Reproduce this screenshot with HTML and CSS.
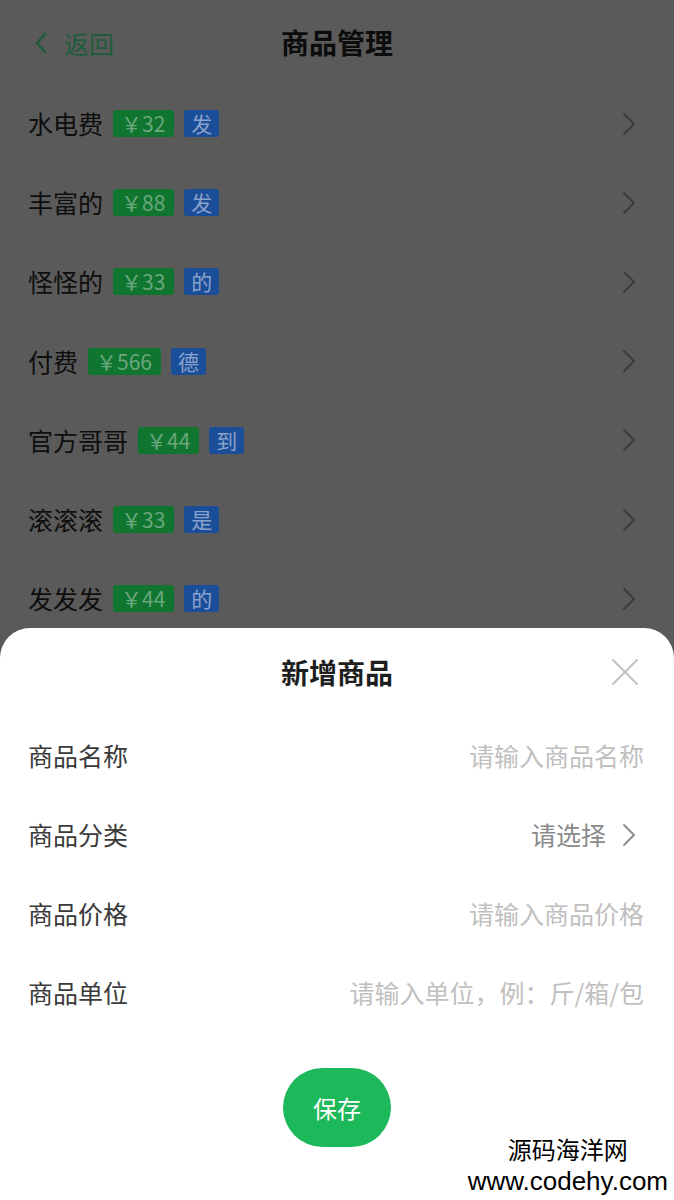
FILE: index.html
```html
<!DOCTYPE html>
<html lang="zh-CN">
<head>
<meta charset="utf-8">
<title>商品管理</title>
<link rel="stylesheet" href="styles.css">
</head>
<body>
<div class="screen">
  <header class="nav">
    <div class="back">
      <svg class="back-icon" width="14" height="22" viewBox="0 0 14 22"><polyline points="11,2 3,11 11,20" fill="none" stroke="currentColor" stroke-width="2.6" stroke-linecap="round" stroke-linejoin="round"/></svg>
      <span>返回</span>
    </div>
    <h1 class="nav-title">商品管理</h1>
    <div></div>
  </header>

  <ul class="list">
    <li class="row"><span class="name">水电费</span><span class="tag price">￥32</span><span class="tag unit">发</span><svg class="arrow" width="14" height="24" viewBox="0 0 14 24"><polyline points="2,2 12,12 2,22" fill="none" stroke="currentColor" stroke-width="1.8" stroke-linecap="round" stroke-linejoin="round"/></svg></li>
    <li class="row"><span class="name">丰富的</span><span class="tag price">￥88</span><span class="tag unit">发</span><svg class="arrow" width="14" height="24" viewBox="0 0 14 24"><polyline points="2,2 12,12 2,22" fill="none" stroke="currentColor" stroke-width="1.8" stroke-linecap="round" stroke-linejoin="round"/></svg></li>
    <li class="row"><span class="name">怪怪的</span><span class="tag price">￥33</span><span class="tag unit">的</span><svg class="arrow" width="14" height="24" viewBox="0 0 14 24"><polyline points="2,2 12,12 2,22" fill="none" stroke="currentColor" stroke-width="1.8" stroke-linecap="round" stroke-linejoin="round"/></svg></li>
    <li class="row"><span class="name">付费</span><span class="tag price">￥566</span><span class="tag unit">德</span><svg class="arrow" width="14" height="24" viewBox="0 0 14 24"><polyline points="2,2 12,12 2,22" fill="none" stroke="currentColor" stroke-width="1.8" stroke-linecap="round" stroke-linejoin="round"/></svg></li>
    <li class="row"><span class="name">官方哥哥</span><span class="tag price">￥44</span><span class="tag unit">到</span><svg class="arrow" width="14" height="24" viewBox="0 0 14 24"><polyline points="2,2 12,12 2,22" fill="none" stroke="currentColor" stroke-width="1.8" stroke-linecap="round" stroke-linejoin="round"/></svg></li>
    <li class="row"><span class="name">滚滚滚</span><span class="tag price">￥33</span><span class="tag unit">是</span><svg class="arrow" width="14" height="24" viewBox="0 0 14 24"><polyline points="2,2 12,12 2,22" fill="none" stroke="currentColor" stroke-width="1.8" stroke-linecap="round" stroke-linejoin="round"/></svg></li>
    <li class="row"><span class="name">发发发</span><span class="tag price">￥44</span><span class="tag unit">的</span><svg class="arrow" width="14" height="24" viewBox="0 0 14 24"><polyline points="2,2 12,12 2,22" fill="none" stroke="currentColor" stroke-width="1.8" stroke-linecap="round" stroke-linejoin="round"/></svg></li>
  </ul>

  <section class="sheet">
    <div class="sheet-head">
      <h2 class="sheet-title">新增商品</h2>
      <svg class="close" width="28" height="28" viewBox="0 0 28 28"><path d="M2 2 L26 26 M26 2 L2 26" stroke="currentColor" stroke-width="2.2" stroke-linecap="round"/></svg>
    </div>
    <div class="form">
      <div class="field"><span class="label">商品名称</span><span class="placeholder">请输入商品名称</span></div>
      <div class="field"><span class="label">商品分类</span><span class="select">请选择</span><svg class="arrow sel-arrow" width="14" height="24" viewBox="0 0 14 24"><polyline points="2,2 12,12 2,22" fill="none" stroke="currentColor" stroke-width="1.8" stroke-linecap="round" stroke-linejoin="round"/></svg></div>
      <div class="field"><span class="label">商品价格</span><span class="placeholder">请输入商品价格</span></div>
      <div class="field"><span class="label">商品单位</span><span class="placeholder">请输入单位，例：斤/箱/包</span></div>
    </div>
    <div class="actions"><button class="save">保存</button></div>
    <div class="watermark">
      <div class="wm-cn">源码海洋网</div>
      <div class="wm-url">www.codehy.com</div>
    </div>
  </section>
</div>
</body>
</html>
```

FILE: styles.css
```css
* { box-sizing: border-box; }
html, body { margin: 0; padding: 0; }
body {
  background: #5a5a5a;
  font-family: "Noto Sans CJK SC", "Noto Sans", sans-serif;
}
.screen {
  position: relative;
  width: 674px;
  height: 1200px;
  overflow: hidden;
  background: #5a5a5a;
}
.nav {
  height: 84px;
  display: grid;
  grid-template-columns: 1fr auto 1fr;
  align-items: center;
  padding: 0 34px;
}
.back {
  display: flex;
  align-items: center;
  gap: 16px;
  color: #1f5d3a;
  font-size: 25px;
  line-height: 1;
  margin-top: 2px;
}
.back-icon { display: block; }
.nav-title {
  margin: 0;
  font-size: 28px;
  font-weight: 700;
  color: #0c0c0c;
  line-height: 1;
}
.list {
  list-style: none;
  margin: 0;
  padding: 0;
}
.row {
  height: 79.2px;
  display: flex;
  align-items: center;
  padding: 0 38px 0 28px;
}
.name {
  font-size: 25px;
  color: #0e0e0e;
  line-height: 1;
  margin-right: 10px;
}
.tag {
  height: 27px;
  display: inline-flex;
  align-items: center;
  font-size: 21px;
  line-height: 1;
  border-radius: 3px;
  margin-right: 10px;
}
.price {
  background: #10762f;
  color: #6aa67e;
  padding: 0 9px 0 8px;
}
.unit {
  background: #1b4e98;
  color: #8aa2cc;
  padding: 0 7px;
}
.arrow {
  display: block;
  margin-left: auto;
  color: #3a3a3a;
}
.sheet {
  position: absolute;
  left: 0;
  right: 0;
  top: 628px;
  bottom: 0;
  background: #fff;
  border-radius: 30px 30px 0 0;
}
.sheet-head {
  position: relative;
  height: 88px;
  display: flex;
  align-items: center;
  justify-content: center;
}
.sheet-title {
  margin: 0;
  font-size: 28px;
  font-weight: 700;
  color: #1e1e1e;
  line-height: 1;
}
.close {
  position: absolute;
  right: 35px;
  top: 30px;
  color: #c4c4c4;
}
.field {
  height: 79px;
  display: flex;
  align-items: center;
  padding: 0 30px 0 28px;
  font-size: 25px;
  line-height: 1;
}
.label {
  color: #3a3a3a;
}
.placeholder {
  margin-left: auto;
  color: #c0c0c0;
}
.select {
  margin-left: auto;
  color: #8a8a8a;
  margin-right: 16px;
}
.sel-arrow {
  margin-left: 0;
  margin-right: 8px;
  color: #8a8a8a;
}
.actions {
  display: flex;
  justify-content: center;
  padding-top: 36px;
}
.save {
  width: 108px;
  height: 79px;
  border: none;
  border-radius: 40px;
  background: #1cb85a;
  color: #fff;
  font-family: "Noto Sans CJK SC", sans-serif;
  font-size: 24px;
  padding: 0;
}
.watermark {
  position: absolute;
  right: 6px;
  bottom: 6px;
  display: flex;
  flex-direction: column;
  align-items: center;
  color: #000;
}
.wm-cn {
  font-size: 24px;
  line-height: 30px;
  font-family: "Noto Sans CJK SC", sans-serif;
  margin-bottom: 4px;
}
.wm-url {
  font-size: 26px;
  line-height: 26px;
  font-family: "Liberation Sans", Arial, sans-serif;
}
```
